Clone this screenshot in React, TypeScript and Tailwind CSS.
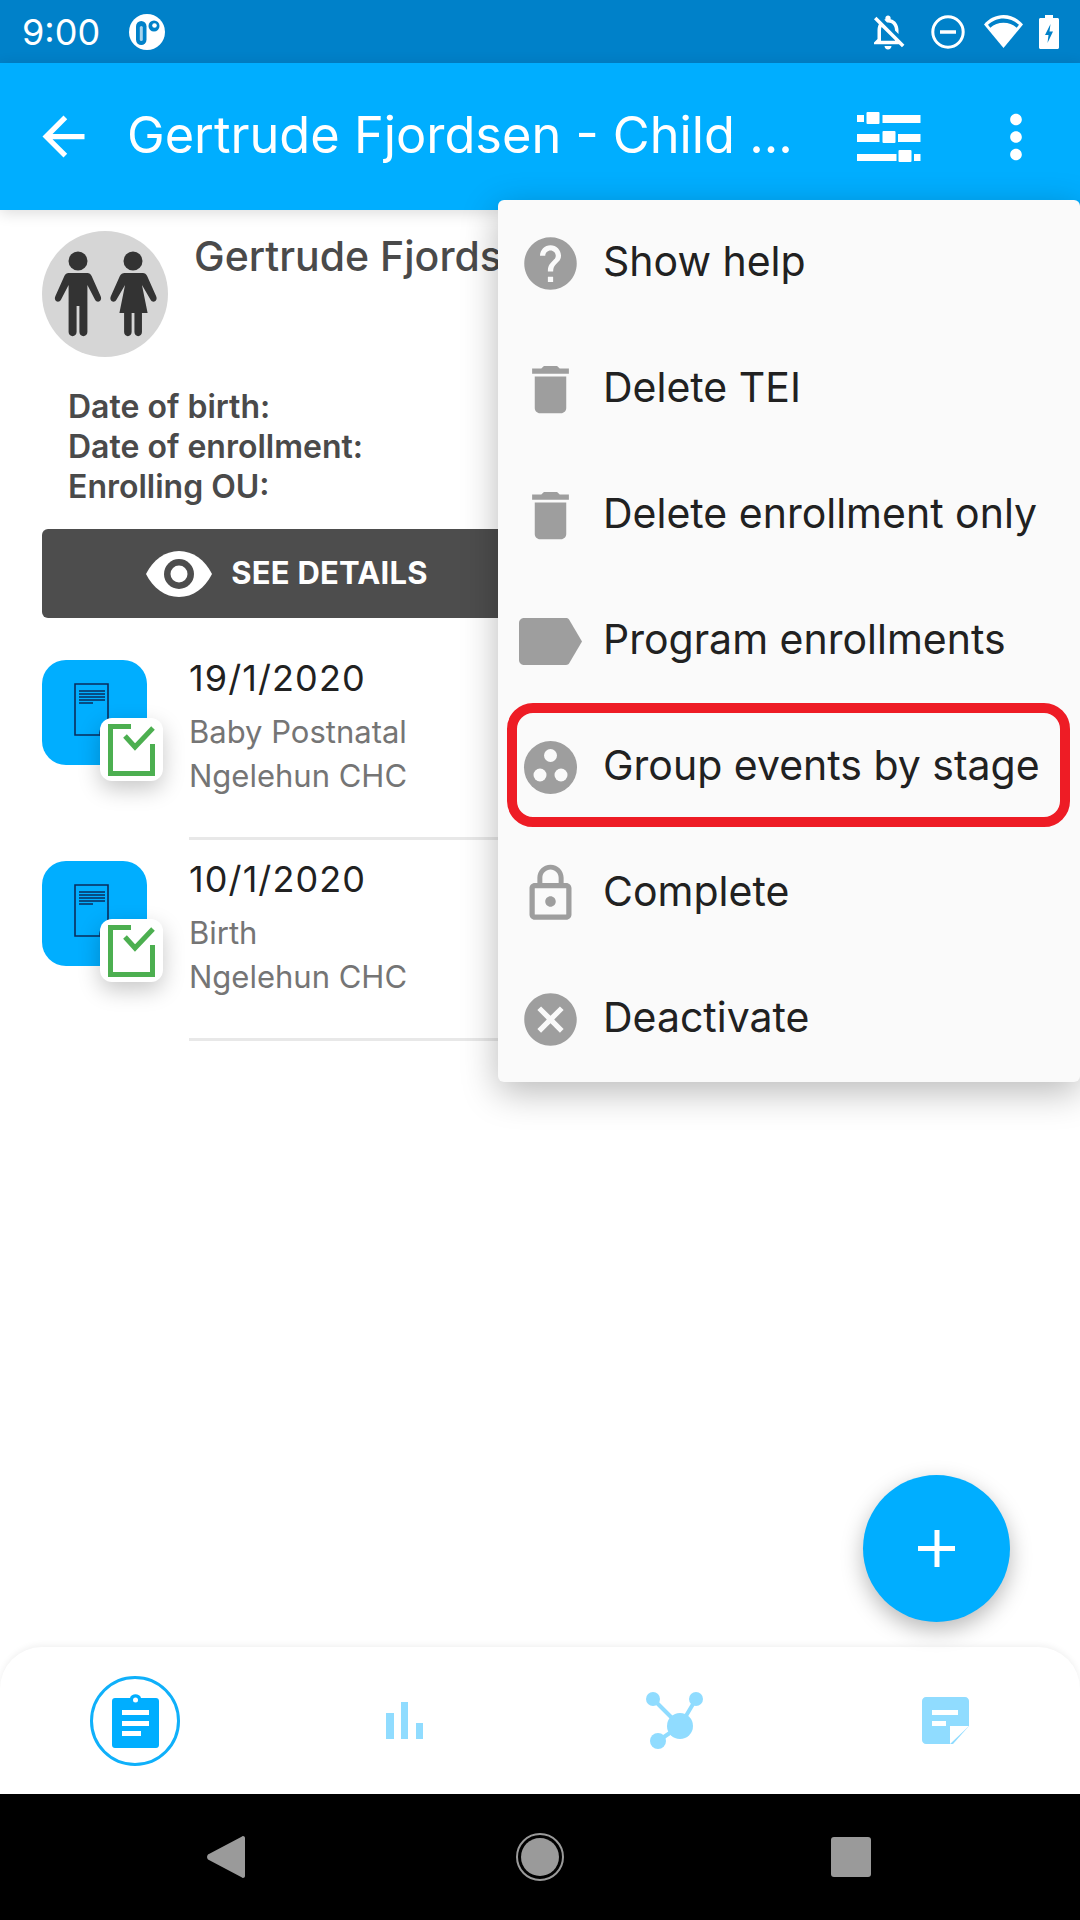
import { MdArrowBack, MdCancel, MdDelete, MdHelp, MdLockOutline, MdMoreVert, MdOutlineNotificationsOff } from 'react-icons/md';

function StatusApp() {
  return (
    <svg width="36" height="36" viewBox="0 0 36 36">
      <circle cx="18" cy="18" r="18" fill="#fff" />
      <rect x="7" y="7" width="10.500" height="24" rx="5.250" fill="#0081c9" />
      <rect x="10.800" y="12" width="3" height="15" rx="1.500" fill="#a8d4ec" />
      <circle cx="25" cy="12" r="5.500" fill="#0081c9" />
      <circle cx="25.500" cy="11.500" r="2.300" fill="#fff" />
    </svg>
  );
}

function MinusCircle() {
  return (
    <svg width="34" height="34" viewBox="0 0 34 34" fill="none" stroke="#fff" strokeWidth="3">
      <circle cx="17" cy="17" r="15.200" />
      <path d="M9 17h16" strokeWidth="3.500" />
    </svg>
  );
}

function Wifi() {
  return (
    <svg width="39" height="33" viewBox="0 0 39 33">
      <path d="M19.500 33L0 9.500C5 3.500 12 0 19.500 0S34 3.500 39 9.500z" fill="#fff" />
      <path d="M4 9.800C8 6 13.500 3.400 19.500 3.400S31 6 35 9.800l-2.300 3C29 9.500 24.500 7.800 19.500 7.800S10 9.500 6.300 12.800z" fill="#0081c9" />
    </svg>
  );
}

function BatteryCharging() {
  return (
    <svg width="20" height="34" viewBox="0 0 20 34">
      <path d="M6 0h8v3h4.500c.8 0 1.500.7 1.500 1.500v28c0 .8-.7 1.500-1.500 1.500h-17C.7 34 0 33.300 0 32.500v-28C0 3.700.7 3 1.500 3H6z" fill="#fff" />
      <path d="M11.500 9L6 20h3.500l-1 8 5.500-11.500h-3.500z" fill="#0081c9" />
    </svg>
  );
}

function FilterIcon() {
  return (
    <svg width="64" height="50" viewBox="0 0 64 50" fill="#fff">
      <rect x="0" y="3" width="7" height="7" />
      <rect x="9.500" y="0" width="13" height="12" rx="1" />
      <rect x="25.500" y="3" width="38" height="8" />
      <rect x="0" y="22" width="22.500" height="8" />
      <rect x="25.500" y="19" width="13" height="12" rx="1" />
      <rect x="41" y="22" width="22.500" height="8" />
      <rect x="0" y="42" width="39.500" height="7" />
      <rect x="41.500" y="38" width="13" height="12" rx="1" />
      <rect x="57" y="42" width="6.500" height="7" />
    </svg>
  );
}

function ParentsIcon() {
  return (
    <svg className="shrink-0" width="126" height="126" viewBox="0 0 126 126">
      <circle cx="63" cy="63" r="63" fill="#d6d6d6" />
      <g fill="#333">
        <circle cx="36" cy="30" r="9.500" />
        <path transform="translate(36 0) scale(.94 1) translate(-36 0)" d="M26 42h20c2 0 3.500 1 4.500 3l9.500 20c2.500 5-3.500 8-6 3.500L46 54v47c0 5.500-8.500 5.500-8.500 0V75h-3v26c0 5.500-8.500 5.500-8.500 0V54l-8 14.500c-2.500 4.500-8.500 1.500-6-3.500l9.500-20c1-2 2.500-3 4.500-3z" />
        <circle cx="91" cy="30" r="9.500" />
        <path transform="translate(91.500 0) scale(.94 1) translate(-91 0)" d="M81 42h20c2 0 3.500 1 4.500 3l9.500 20c2.500 5-3.500 8-6 3.500L100 54l6 28H100v19c0 5.500-8 5.500-8 0V82h-3v19c0 5.500-8 5.500-8 0V82H76l6-28-9 14.500c-2.500 4.500-8.500 1.500-6-3.500l9.500-20c1-2 3-3 5-3z" />
      </g>
    </svg>
  );
}

function EyeIcon() {
  return (
    <svg width="66" height="46" viewBox="0 0 66 46">
      <path d="M0 23C7 9 19 0 33 0s26 9 33 23c-7 14-19 23-33 23S7 37 0 23z" fill="#fff" />
      <circle cx="33" cy="23" r="15" fill="#4d4d4d" />
      <circle cx="33" cy="23" r="8.500" fill="#fff" />
    </svg>
  );
}

function EventTile() {
  return (
    <div className="relative w-[105px] h-[105px] shrink-0 mt-[4px] rounded-[24px] bg-[#00aeff]">
      <svg className="ml-[32px] mt-[23px]" width="36" height="56" viewBox="0 0 36 56" fill="none" stroke="#0a2d5c" strokeWidth="1.600">
        <path d="M1 1h33v51H1z" />
        <path d="M5 8h26M5 11h26M5 14h26M5 17h26M5 20h14" strokeWidth="1.300" />
        <circle cx="33" cy="50" r="7" />
      </svg>
      <div className="absolute left-[58px] top-[58px] w-[63px] h-[63px] rounded-[12px] bg-white shadow-[0_8px_22px_rgba(0,0,0,0.22)]">
        <svg width="63" height="63" viewBox="0 0 63 63" fill="none" stroke="#4caf50" strokeWidth="5">
          <path d="M31 8.500H10.500v47h42V26" />
          <path d="M25 18l10 11 18-19" />
        </svg>
      </div>
    </div>
  );
}

function EventRow({ date, stage, unit }: { date: string; stage: string; unit: string }) {
  return (
    <div className="flex items-start pl-[42px] gap-[42px] h-[201px]">
      <EventTile />
      <div className="flex-1 border-b-[3px] border-[#e8e8e8] h-[184px]">
        <p className="text-[36px] tracking-[1.100px] leading-[44px] text-[#212121] mb-[10px]">{date}</p>
        <p className="text-[31px] leading-[44px] text-[#757575]">{stage}</p>
        <p className="text-[31px] leading-[44px] text-[#757575]">{unit}</p>
      </div>
    </div>
  );
}

function MenuIconGroup() {
  return (
    <svg className="shrink-0" width="63" height="63" viewBox="0 0 63 63">
      <circle cx="31.500" cy="31.500" r="26.500" fill="#9e9e9e" />
      <circle cx="31.500" cy="19.500" r="6.500" fill="#fafafa" />
      <circle cx="21" cy="39" r="6.500" fill="#fafafa" />
      <circle cx="42" cy="39" r="6.500" fill="#fafafa" />
    </svg>
  );
}

function MenuIconTag() {
  return (
    <svg className="shrink-0" width="63" height="63" viewBox="0 0 63 63">
      <path d="M5 8h42c1.500 0 2.500.7 3.200 1.700L63 31.500 50.200 53.300c-.7 1-1.700 1.700-3.200 1.700H5c-2.800 0-5-2.200-5-5V13c0-2.800 2.200-5 5-5z" fill="#9e9e9e" />
    </svg>
  );
}

const menuItems = [
  { label: 'Show help', icon: <MdHelp size={63} color="#9e9e9e" /> },
  { label: 'Delete TEI', icon: <MdDelete size={63} color="#9e9e9e" /> },
  { label: 'Delete enrollment only', icon: <MdDelete size={63} color="#9e9e9e" /> },
  { label: 'Program enrollments', icon: <MenuIconTag /> },
  { label: 'Group events by stage', icon: <MenuIconGroup />, highlighted: true },
  { label: 'Complete', icon: <MdLockOutline size={63} color="#9e9e9e" /> },
  { label: 'Deactivate', icon: <MdCancel size={63} color="#9e9e9e" /> },
];

function OverflowMenu() {
  return (
    <div className="absolute z-20 left-[498px] top-[200px] w-[582px] rounded-[6px] bg-[#fafafa] shadow-[0_10px_36px_rgba(0,0,0,0.28)]">
      {menuItems.map((item) => (
        <div key={item.label} className="relative flex items-center h-[126px] pl-[21px] gap-[21px]">
          {item.icon}
          <span className="text-[41px] text-[#212121] whitespace-nowrap pb-[3px]">{item.label}</span>
          {item.highlighted && (
            <div className="absolute left-[9px] -top-px w-[563px] h-[124px] rounded-[26px] border-[10px] border-[#ee1c25]" />
          )}
        </div>
      ))}
    </div>
  );
}

function ClipboardIcon() {
  return (
    <svg width="47" height="54" viewBox="0 0 47 54">
      <path d="M3 4h15c1-5 10-5 11 0h15c1.700 0 3 1.300 3 3v44c0 1.700-1.300 3-3 3H3c-1.700 0-3-1.300-3-3V7c0-1.700 1.300-3 3-3z" fill="#00aeff" />
      <circle cx="23.500" cy="6" r="2.500" fill="#fff" />
      <path d="M10 16h27v5H10zM10 27h27v5H10zM10 37h19v5H10z" fill="#fff" />
    </svg>
  );
}

function BarsIcon() {
  return (
    <svg width="37" height="37" viewBox="0 0 37 37" fill="#90dcff">
      <rect x="0" y="11" width="8" height="26" />
      <rect x="15" y="0" width="7" height="37" />
      <rect x="30" y="21" width="7" height="16" />
    </svg>
  );
}

function GraphIcon() {
  return (
    <svg width="58" height="58" viewBox="0 0 58 58" fill="#90dcff" stroke="#90dcff">
      <path d="M7 7l27 27M50 7l-16 27M12 49l22-15" strokeWidth="4" />
      <circle cx="7" cy="7" r="7" stroke="none" />
      <circle cx="50" cy="7" r="7" stroke="none" />
      <circle cx="34" cy="34" r="13" stroke="none" />
      <circle cx="12" cy="49" r="8" stroke="none" />
    </svg>
  );
}

function NoteIcon() {
  return (
    <svg width="47" height="47" viewBox="0 0 47 47">
      <path d="M4 0h39c2.200 0 4 1.800 4 4v25L31 47H4c-2.200 0-4-1.800-4-4V4c0-2.200 1.800-4 4-4z" fill="#90dcff" />
      <path d="M10 13h26v5H10zM10 24h14v5H10zM28 29h19L28 47z" fill="#fff" />
    </svg>
  );
}

export default function App() {
  return (
    <div className="relative flex flex-col w-[1080px] h-[1920px] overflow-hidden bg-white font-[Inter,sans-serif]">
      <div className="flex items-center h-[63px] bg-[#0081c9] pl-[22px] text-white shrink-0">
        <span className="text-[36px] w-[107px]">9:00</span>
        <StatusApp />
        <div className="ml-[702px] flex items-center">
          <MdOutlineNotificationsOff size={42} color="#fff" />
          <div className="ml-[22px]"><MinusCircle /></div>
          <div className="ml-[19px]"><Wifi /></div>
          <div className="ml-[16px]"><BatteryCharging /></div>
        </div>
      </div>

      <header className="relative z-10 flex items-center h-[147px] bg-[#00aeff] text-white shrink-0 pl-[32px] pr-[29px] shadow-[0_3px_14px_rgba(0,0,0,0.14)]">
        <MdArrowBack size={63} color="#fff" />
        <h1 className="ml-[32px] pb-[3px] text-[50.500px] font-normal whitespace-nowrap">Gertrude Fjordsen - Child ...</h1>
        <div className="ml-auto flex items-center gap-[60px]">
          <FilterIcon />
          <MdMoreVert size={70} color="#fff" />
        </div>
      </header>

      <main className="flex-1 min-h-0">
        <section className="pt-[21px] px-[42px]">
          <div className="flex items-start gap-[26px]">
            <ParentsIcon />
            <h2 className="text-[41px] leading-[50px] font-medium text-[#4a4a4a] whitespace-nowrap">Gertrude Fjordsen</h2>
          </div>
          <div className="mt-[30px] pl-[26px] text-[32px] leading-[40px] font-semibold text-[#4a4a4a]">
            <p>Date of birth:</p>
            <p>Date of enrollment:</p>
            <p>Enrolling OU:</p>
          </div>
          <button className="mt-[22px] mb-[38px] flex items-center justify-center gap-[19px] w-[490px] h-[89px] rounded-[6px] bg-[#4d4d4d] text-white text-[31px] tracking-[0.200px] font-bold">
            <EyeIcon />
            <span>SEE DETAILS</span>
          </button>
        </section>
        <EventRow date="19/1/2020" stage="Baby Postnatal" unit="Ngelehun CHC" />
        <EventRow date="10/1/2020" stage="Birth" unit="Ngelehun CHC" />
      </main>

      <nav className="relative grid grid-cols-4 items-center h-[147px] shrink-0 rounded-t-[42px] bg-white shadow-[0_-2px_6px_rgba(0,0,0,0.06)]">
        <div className="flex justify-center">
          <div className="flex items-center justify-center w-[90px] h-[90px] rounded-full border-[3px] border-[#0fb0fa]">
            <ClipboardIcon />
          </div>
        </div>
        <div className="flex justify-center pr-[2px]"><BarsIcon /></div>
        <div className="flex justify-center"><GraphIcon /></div>
        <div className="flex justify-center"><NoteIcon /></div>
      </nav>

      <div className="flex items-center h-[126px] bg-black shrink-0 pl-[207px]">
        <svg width="38" height="42" viewBox="0 0 38 42">
          <path d="M36 0c1 0 2 .7 2 2v38c0 1.300-1 2-2 2-.6 0-1-.3-1.400-.8L1 23.500c-1.300-1.500-1.300-3.500 0-5L34.600.8C35 .3 35.400 0 36 0z" fill="#9a9a9a" />
        </svg>
        <div className="ml-[271px] flex items-center justify-center w-[48px] h-[48px] rounded-full border-[2px] border-[#9a9a9a]">
          <div className="w-[38px] h-[38px] rounded-full bg-[#9a9a9a]" />
        </div>
        <div className="ml-[267px] w-[40px] h-[40px] rounded-[3px] bg-[#9a9a9a]" />
      </div>

      <OverflowMenu />

      <button className="absolute z-20 left-[863px] top-[1475px] flex items-center justify-center w-[147px] h-[147px] rounded-full bg-[#00aeff] shadow-[0_8px_22px_rgba(0,0,0,0.28)]">
        <svg width="37" height="37" viewBox="0 0 37 37" fill="#fff">
          <path d="M16.500 0h5v16h15.500v5H21.500v16h-5V21H0v-5h16.500z" />
        </svg>
      </button>
    </div>
  );
}
